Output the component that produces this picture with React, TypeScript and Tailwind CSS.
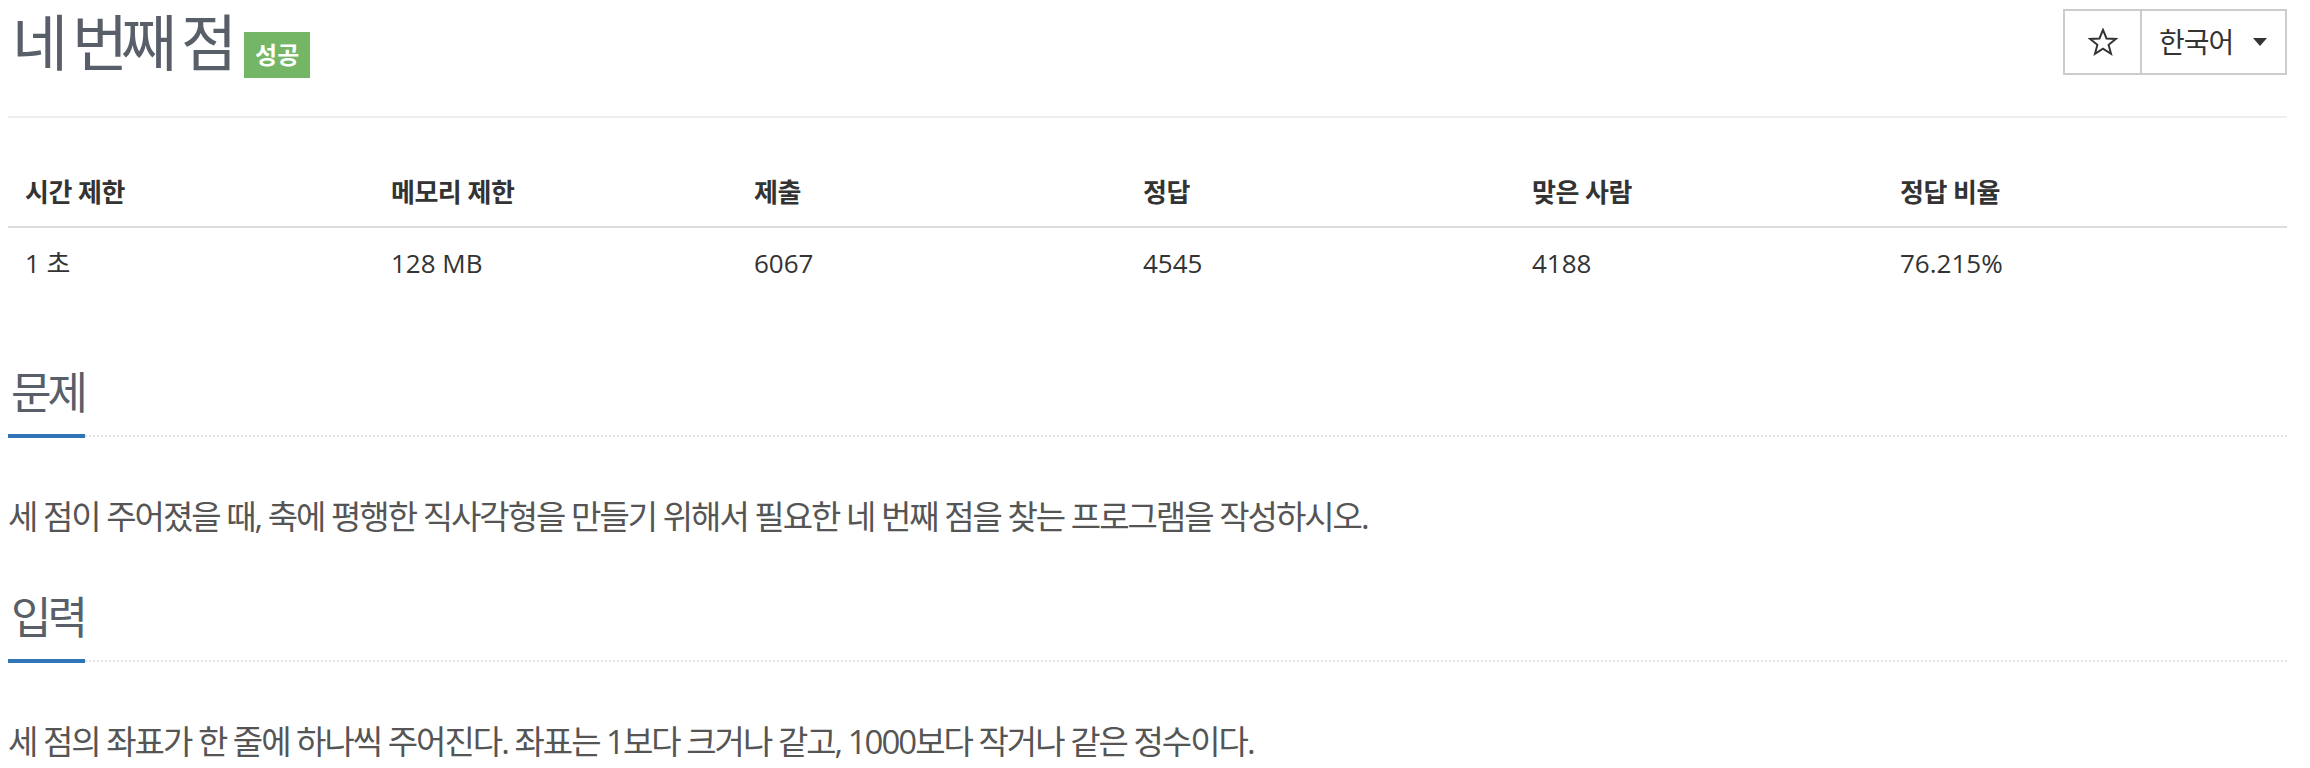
import React from "react";

const font = { fontFamily: '"Open Sans", "Noto Sans CJK KR", sans-serif' };

function StarIcon() {
  return (
    <svg width="30" height="28" viewBox="0 0 24 23" fill="none">
      <path
        d="M12 1.5l2.9 7.1 7.6.4-5.9 4.8 2 7.4L12 17l-6.6 4.2 2-7.4L1.5 9l7.6-.4z"
        stroke="#333"
        strokeWidth="1.6"
        strokeLinejoin="miter"
      />
    </svg>
  );
}

function Section({ title, children }: { title: string; children: React.ReactNode }) {
  return (
    <section>
      <h2 className="flex border-b-2 border-dotted border-[#e2e2e2]">
        <span className="mb-[-3px] border-b-4 border-[#3175b7] pb-[20px] pl-[3px] pr-[1px] text-[44px] leading-[44px] tracking-[-4px] text-[#585f69]">
          {title}
        </span>
      </h2>
      <p className="pt-[60px] text-[33px] leading-[40px] tracking-[-2px] text-[#555]">{children}</p>
    </section>
  );
}

const cols = [
  { head: "시간 제한", val: "1 초", w: "w-[366px]" },
  { head: "메모리 제한", val: "128 MB", w: "w-[363px]" },
  { head: "제출", val: "6067", w: "w-[389px]" },
  { head: "정답", val: "4545", w: "w-[389px]" },
  { head: "맞은 사람", val: "4188", w: "w-[368px]" },
  { head: "정답 비율", val: "76.215%", w: "flex-1" },
];

export default function App() {
  return (
    <div className="min-h-screen bg-white pl-[8px] pr-[23px]" style={font}>
      <header className="flex h-[118px] items-start justify-between border-b-2 border-[#eee]">
        <div className="flex items-start">
          <h1 className="pl-[4px] pt-[8px] text-[61px] leading-[70px] tracking-[-7px] text-[#585f69] [word-spacing:2px]">
            네 번째 점
          </h1>
          <span className="ml-[14px] mt-[32px] flex h-[46px] w-[66px] items-center justify-center bg-[#74b566] text-[24px] font-semibold text-white">
            성공
          </span>
        </div>
        <div className="mt-[9px] flex h-[66px] border-2 border-[#ccc] bg-white">
          <button className="flex w-[77px] items-center justify-center border-r-2 border-[#ccc]">
            <StarIcon />
          </button>
          <button className="flex w-[143px] items-center gap-[20px] pl-[17px] text-[28px] tracking-[-1px] text-[#333]">
            한국어
            <svg width="14" height="8" viewBox="0 0 14 8">
              <path d="M0 0h14L7 8z" fill="#333" />
            </svg>
          </button>
        </div>
      </header>

      <div className="mt-[40px]">
        <div className="flex h-[70px] items-center border-b-2 border-[#ddd] text-[26px] font-bold tracking-[-0.5px] text-[#333]">
          {cols.map((c) => (
            <div key={c.head} className={`${c.w} pl-[17px]`}>
              {c.head}
            </div>
          ))}
        </div>
        <div className="flex h-[70px] items-center text-[26px] text-[#333]">
          {cols.map((c) => (
            <div key={c.head} className={`${c.w} pl-[17px]`}>
              {c.val}
            </div>
          ))}
        </div>
      </div>

      <div className="mt-[72px] flex flex-col gap-[58px]">
        <Section title="문제">
          세 점이 주어졌을 때, 축에 평행한 직사각형을 만들기 위해서 필요한 네 번째 점을 찾는 프로그램을 작성하시오.
        </Section>
        <Section title="입력">
          세 점의 좌표가 한 줄에 하나씩 주어진다. 좌표는 1보다 크거나 같고, 1000보다 작거나 같은 정수이다.
        </Section>
      </div>
    </div>
  );
}
